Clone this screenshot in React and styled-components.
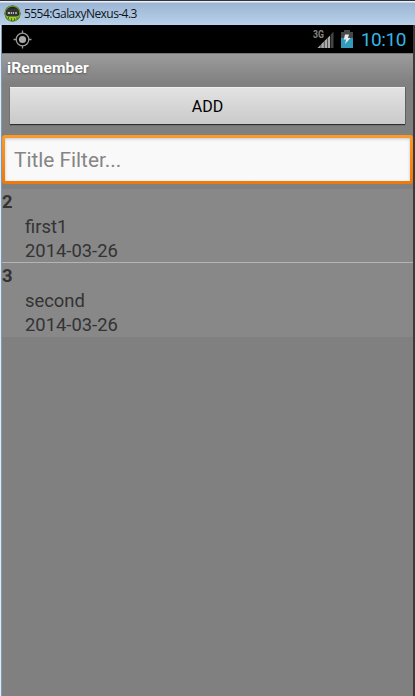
import React from "react";
import styled, { createGlobalStyle } from "styled-components";

const GlobalStyle = createGlobalStyle`
  * { box-sizing: border-box; }
  body { margin: 0; background: #808080; overflow: hidden; }
  button, input { font-family: Roboto, sans-serif; }
`;

const Window = styled.div`
  width: 415px;
  height: 696px;
  display: flex;
  flex-direction: column;
  overflow: hidden;
  font-family: Roboto, sans-serif;
  background: #3c3c3c;
`;

const TitleBar = styled.header`
  height: 25px;
  flex: none;
  display: flex;
  align-items: center;
  gap: 3px;
  padding: 1px 0 0 4px;
  border-top: 1px solid #35323a;
  background: linear-gradient(#e8f1fa 0, #e8f1fa 1px, #9bb5d3 2px, #b9d1ea 100%);
`;

const WindowTitle = styled.span`
  font: 12px/22px "Open Sans", sans-serif;
  letter-spacing: ${(p) => p.$tracking}px;
  color: #10151c;
  white-space: nowrap;
`;

const Screen = styled.main`
  flex: 1;
  display: flex;
  flex-direction: column;
  border-left: 1px solid #e0e9f2;
  border-right: 2px solid #3b3b3b;
  box-shadow: inset 1px 0 0 #7c9ab5;
  padding-left: 1px;
  background: #808080;
`;

const StatusBar = styled.div`
  height: 28px;
  flex: none;
  display: flex;
  align-items: center;
  justify-content: space-between;
  padding: 0 7px 0 11px;
  background: #000;
`;

const StatusIcons = styled.div`
  display: flex;
  align-items: center;
`;

const Clock = styled.span`
  margin-left: 8px;
  font-size: 19px;
  line-height: 28px;
  letter-spacing: -0.4px;
  color: #33b5e5;
  padding-top: 1px;
`;

const AppBar = styled.h1`
  height: 30px;
  flex: none;
  margin: 0;
  padding: 0 5px;
  border-top: 1px solid #777;
  background: linear-gradient(#9c9c9c, #808080);
  color: #fff;
  font-size: 15.5px;
  font-weight: 700;
  letter-spacing: 0.15px;
  line-height: 29px;
  text-shadow: 0 1px 2px #555;
`;

const Form = styled.div`
  flex: none;
  display: flex;
  flex-direction: column;
  padding-top: 4px;
`;

const AddButton = styled.button`
  height: 37px;
  margin: 0 8px;
  padding: 0;
  border: 0;
  border-top: 1px solid #eee;
  background: linear-gradient(#e2e2e2, #cacaca);
  box-shadow: 0 1px 1px #303030, 1px 0 0 #696969;
  color: #000;
  font-size: 16px;
`;

const FilterFrame = styled.label`
  height: 49px;
  display: flex;
  margin-top: 11px;
  padding: 3px;
  border-radius: 3px;
  background: linear-gradient(#fb9a29, #ee780c);
`;

const FilterInput = styled.input`
  flex: 1;
  min-width: 0;
  border: 0;
  border-radius: 0;
  outline: 0;
  padding: 0 9px;
  background: #f9f9f9;
  box-shadow: inset 0 1px 3px #c4c4c4;
  color: #333;
  font-size: 20.8px;
  &::placeholder { color: #858585; opacity: 1; }
`;

const List = styled.ul`
  margin: 5px 0 0;
  padding: 0;
  list-style: none;
  color: #333;
  font-size: 18.4px;
  line-height: 24.5px;
`;

const Item = styled.li`
  height: 73px;
  background: #888;
  padding-top: 1px;
  & + & { height: 75px; border-top: 1px solid #b4b4b4; padding-top: 1px; }
`;

const ItemId = styled.div`
  font-weight: 700;
`;

const ItemLine = styled.div`
  padding-left: 23px;
`;

const EmulatorIcon = () => (
  <svg width="17" height="17" viewBox="0 0 17 17">
    <circle cx="8.5" cy="8.5" r="8" fill="#20281b" />
    <path d="M1.6 10.5h13.8A7.2 7.2 0 0 1 1.6 10.5Z" fill="#9fd02c" />
    <circle cx="8.5" cy="8.5" r="7.4" fill="none" stroke="#6f9a2e" strokeWidth="1.2" />
    <rect x="2.5" y="3.5" width="12" height="8" rx="2" fill="#343638" />
    <path d="M3.8 8h2.2m.8 0h1.2m.8 0h1.2m1.2 0h1.6" stroke="#e3eadc" strokeWidth="1.6" />
    <path d="M4.5 12v2m3-1v3m3-3v3m2.5-4v2" stroke="#3f5c14" strokeWidth=".8" />
  </svg>
);

const LocationIcon = () => (
  <svg width="19" height="19" viewBox="0 0 19 19" fill="none" stroke="#999" strokeWidth="1.3">
    <circle cx="9.5" cy="9.5" r="6.3" />
    <circle cx="9.5" cy="9.5" r="3.6" fill="#aaa" stroke="none" />
    <path d="M9.5 .5v3M9.5 15.5v3M.5 9.5h3M15.5 9.5h3" />
  </svg>
);

const SignalIcon = () => (
  <svg width="21" height="20" viewBox="0 0 21 20">
    <text x="0" y="9" fontFamily="Roboto, sans-serif" fontSize="10" fontWeight="700" fill="#858585" textLength="11" lengthAdjust="spacingAndGlyphs">3G</text>
    <path d="M4.5 19l3.2-3.2V19zM8.2 19v-3.7l2.7-2.7V19zM11.4 19v-6.9l2.6-2.6V19zM14.5 19V9l2.6-2.6V19z" fill="#aaa" />
    <path d="M17.7 19V5.7L20.5 2.5V19z" fill="#454545" />
  </svg>
);

const BatteryIcon = () => (
  <svg width="12" height="18" viewBox="0 0 12 18">
    <path d="M0 2h3V0h6v2h3v16H0z" fill="#484848" />
    <path d="M0 8h12v10H0z" fill="#329bb9" />
    <path d="M4 4.5h4L7 8h2.5L4 14l1.2-4.5H2.8z" fill="#e8eeee" />
  </svg>
);

const IconGap = styled.span`
  width: 7px;
`;

const records = [
  { id: 2, title: "first1", date: "2014-03-26" },
  { id: 3, title: "second", date: "2014-03-26" },
];

export default function App() {
  return (
    <Window>
      <GlobalStyle />
      <TitleBar>
        <EmulatorIcon />
        <WindowTitle $tracking={-0.55}>5554:GalaxyNexus-4.3</WindowTitle>
      </TitleBar>
      <Screen>
        <StatusBar>
          <LocationIcon />
          <StatusIcons>
            <SignalIcon />
            <IconGap />
            <BatteryIcon />
            <Clock>10:10</Clock>
          </StatusIcons>
        </StatusBar>
        <AppBar>iRemember</AppBar>
        <Form>
          <AddButton type="button">ADD</AddButton>
          <FilterFrame>
            <FilterInput placeholder="Title Filter..." />
          </FilterFrame>
        </Form>
        <List>
          {records.map((record) => (
            <Item key={record.id}>
              <ItemId>{record.id}</ItemId>
              <ItemLine>{record.title}</ItemLine>
              <ItemLine>{record.date}</ItemLine>
            </Item>
          ))}
        </List>
      </Screen>
    </Window>
  );
}
